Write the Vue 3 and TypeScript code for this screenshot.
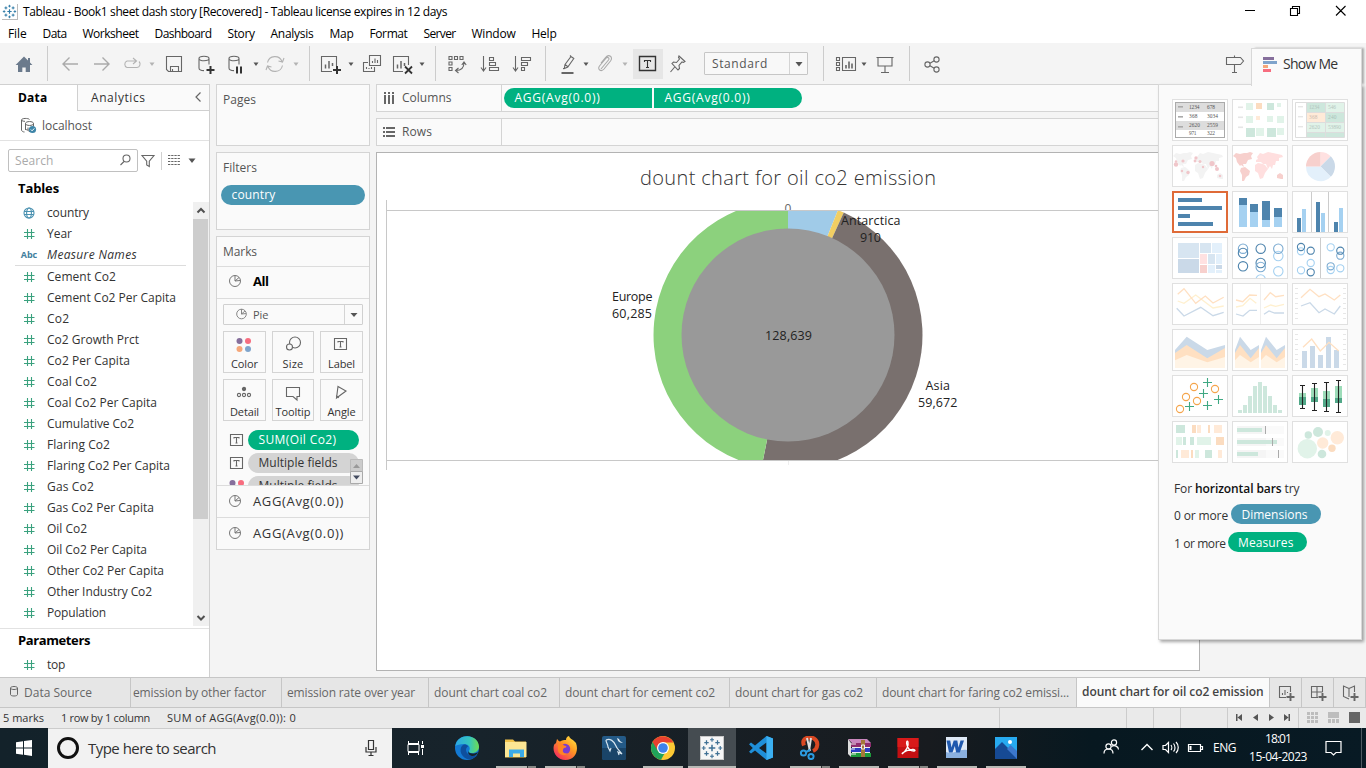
<script setup lang="ts">
type Tool = { k: string; gap: number; off?: boolean }

/* Spreads a label's letters so that it fills the given width in pixels. */
const vFit = {
  mounted(el: HTMLElement, binding: { value: number }) {
    const range = document.createRange()
    range.selectNodeContents(el)
    const natural = range.getBoundingClientRect().width
    const count = (el.textContent || '').trim().length
    if (count > 0 && natural > 0) {
      el.style.letterSpacing = ((binding.value - natural) / count).toFixed(3) + 'px'
    }
  },
}

const menus: [string, number][] = [
  ['File', 18.5], ['Data', 24], ['Worksheet', 56], ['Dashboard', 57], ['Story', 27], ['Analysis', 43],
  ['Map', 24], ['Format', 38], ['Server', 32], ['Window', 44], ['Help', 25],
]

const r = (x: number, y: number, x2: number, y2: number, c: string) =>
  `<rect x="${x}" y="${y}" width="${x2 - x}" height="${y2 - y}" fill="${c}"/>`
const c = (x: number, y: number, rad: number, fill: string) => `<circle cx="${x}" cy="${y}" r="${rad}" fill="${fill}" stroke="none"/>`
const ring = (x: number, y: number, rad: number, s: string) =>
  `<circle cx="${x}" cy="${y}" r="${rad}" fill="none" stroke="${s}" stroke-width="1.1"/>`
const line = (pts: string, s: string, w = 1.3) => `<polyline points="${pts}" fill="none" stroke="${s}" stroke-width="${w}"/>`
const area = (pts: string, f: string) => `<polygon points="${pts}" fill="${f}"/>`
const txt = (x: number, y: number, s: string, f: string, w: number) =>
  `<text x="${x}" y="${y}" font-size="5.4" font-family="Liberation Serif, serif" fill="${f}" textLength="${w}">${s}</text>`

const plus = '<path d="M19 14v8M15 18h8" stroke="#333" stroke-width="2"/>'

const icons: Record<string, string> = {
  home: '<path d="M12 4.500 3.600 13H6v7h4.300v-4.600h3.400V20H18v-7h2.400L18 10.500V6h-2v2.400z" fill="#6b7a8c" stroke="none"/>',
  back: '<path d="M20 12H5M11.500 5.500 5 12l6.500 6.500" stroke="#aaa" stroke-width="1.400"/>',
  fwd: '<path d="M4 12h15M12.500 5.500 19 12l-6.500 6.500" stroke="#aaa" stroke-width="1.400"/>',
  redo: '<path d="M16 9H7a3.500 3.500 0 0 0 0 6.500h10a3.500 3.500 0 0 0 2-6M13 6l3.500 3-3.500 3" stroke="#b3b3b3"/>',
  save: '<path d="M4.500 4.500h15v15h-13l-2-2zM8.500 19v-4.500h8V19M10.500 17v2"/>',
  addds: '<path d="M7 6.500v9.500c0 1.600 2 2.600 5 2.600M17 6.500v6M7 6.500c0-3 10-3 10 0s-10 3-10 0"/><path d="M18.500 14v8M14.500 18h8" stroke="#333" stroke-width="2"/>',
  pause: '<path d="M6 6.500v9.500c0 1.600 2 2.600 5 2.600M16 6.500v6M6 6.500c0-3 10-3 10 0s-10 3-10 0"/><path d="M14 14.500v7M18 14.500v7" stroke="#333" stroke-width="2"/>',
  refresh: '<path d="M4.500 10.500a7.600 7.600 0 0 1 14.500-1M19.500 13.500a7.600 7.600 0 0 1-14.500 1M21 6l-1.500 4-4-1M3 18l1.500-4 4 1" stroke="#b3b3b3"/>',
  newsheet: '<path d="M14 19.500H3.500v-15h15V14"/><path d="M7.500 12.500v4M11 9v7.500M14.500 11v3" stroke-width="1.500"/>' + plus,
  dup: '<path d="M9.500 3.500h11v10h-11zM8 10.500H3.500v9h11V15"/><path d="M12.500 9v2M15 6.500v4.500M17.500 8v3M6.500 15v2M9 16v1M11.500 15v2"/>',
  clear: '<path d="M13 19.500H3.500v-15h15V13"/><path d="M7.500 12.500v4M11 9v7.500M14.500 11v3" stroke-width="1.500"/><path d="m15 14.500 7 7M22 14.500l-7 7" stroke="#333" stroke-width="1.800"/>',
  swap: '<path d="M4 4.500h3v3H4zM9.500 4.500h3v3h-3zM15 4.500h3v3h-3zM4 10h3v3H4zM4 15.500h3v3H4zM19 10.500c0 5-3 8-8 8M16.800 13l2.200-3 2.200 3M13.500 16l-3 2.500 3 2.500"/>',
  asc: '<path d="M5.500 4v14M3 15.500 5.500 19 8 15.500M11.500 5.500h4v3h-4zM11.500 10.500h6v3h-6zM11.500 15.500h9v3h-9z"/>',
  desc: '<path d="M5.500 4v14M3 15.500 5.500 19 8 15.500M11.500 5.500h9v3h-9zM11.500 10.500h6v3h-6zM11.500 15.500h3v3h-3z"/>',
  hl: '<path d="m9 12.500 6-8 2.800 2-6 8.500-3.500 1.500zM9 12.500l3 2.200M15 4.500l-1-1M8.300 16.500H7"/><path d="M5.500 21h12" stroke-width="2"/>',
  clip: '<path d="m8 17 7.500-9c1.500-2-1-3.500-2.500-1.800L6.500 14c-2.500 3.200 1.500 6.500 4.500 3L17.500 9c3-4-1.500-7.500-5-3.500L8 11" stroke="#aaa"/>',
  label: '<path d="M4.500 4.500h16v14h-16z" stroke="#333" stroke-width="1.400"/><path d="M9.500 10V8.500h6V10M12.500 8.500v7M11 15.500h3" stroke="#333"/>',
  pin: '<path d="m14 4 6 5.500-1.500 1-1.500-.5-3 3.500.5 3-1.500 1.500L7 11.500 8.500 10l3 .5 3-3.500-1-1.500zM9.700 15 5.500 20"/>',
  fit: '<path d="M2.500 5.500h3v3h-3zM2.500 10.500h3v3h-3zM2.500 15.500h3v3h-3zM8.500 5.500h13v13h-13z"/><path d="M12 13v3.500M15 9.500v7M18 11.500v5" stroke-width="1.600"/>',
  pres: '<path d="M3.500 5.500h17M5 5.500v8.500h14V5.500M12 14v6M8 20.500h8"/>',
  share: '<circle cx="7.500" cy="12.500" r="2.600"/><circle cx="16.500" cy="7.500" r="2.600"/><circle cx="16.500" cy="17.500" r="2.600"/><path d="m10 11.200 4.200-2.400M10 13.800l4.200 2.400"/>',
  sign: '<path d="M11.500 3.500v2M3.500 5.500h14l3 3.500-3 3.500h-14zM11.500 12.500v8M9 20.500h5"/>',
  globe: '<g stroke="#4a91b0"><circle cx="12" cy="12" r="5"/><ellipse cx="12" cy="12" rx="2.400" ry="5"/><path d="M7 10.500h10M7 13.500h10"/></g>',
  hash: '<path d="M10.500 7v10M14.500 7v10M7 10.500h10.500M7 14.500h10.500" stroke="#3aa17e"/>',
  pie: '<circle cx="12" cy="12" r="5.500"/><path d="M12 12V6.500M12 12l4-3.500M12 12l5-.5"/>',
  tbox: '<path d="M5.500 6.500h12v11h-12z" stroke-width="1.100"/><path d="M9 10.500v-1h5v1M11.500 9.500v5.500M10.500 15h2"/>',
  color: c(7.500, 9, 3, '#866f9c') + c(16, 9, 3, '#f76d7f') + c(7.500, 17, 3, '#f5a77a') + c(16, 17, 3, '#7fa4cc'),
  size: '<circle cx="14" cy="10.500" r="5.500"/><circle cx="8.500" cy="15" r="3" fill="#fafafa"/>',
  detail: '<circle cx="12" cy="9" r="1.600" fill="#666"/><circle cx="7" cy="15" r="1.600"/><circle cx="12" cy="15" r="1.600"/><circle cx="17" cy="15" r="1.600"/>',
  tooltip: '<path d="M5.500 7.500h13v9h-2.500v3.500l-4-3.500H5.500z"/>',
  angle: '<path d="m9 6.500 8 4.500-9.500 7zM7 16c1.500.3 2.300 1 2.700 2"/>',
  filter: '<path d="M6 6.500h12l-4.700 5.700v5.300l-2.600-1.500v-3.800z"/>',
  lens: '<circle cx="13.500" cy="10.500" r="3.500"/><path d="m11 13.500-3.500 3.500"/>',
  addsheet: '<path d="M13 17.500H6.500v-11h11V12"/><path d="M9.500 13v2M12 10v5M14.500 12v1"/><path d="M17.500 13v8M13.500 17h8" stroke-width="1.900"/>',
  adddash: '<path d="M13 17.500H6.500v-11h11V12M6.500 12h11M12 6.500v11"/><path d="M17.500 13v8M13.500 17h8" stroke-width="1.900"/>',
  addstory: '<path d="M12 8.500 6.500 6v10.500L12 19M12 8.500 17.500 6v6M12 8.500V17"/><path d="M17.500 13v8M13.500 17h8" stroke-width="1.900"/>',
}

const tools: Tool[] = [
  { k: 'home', gap: 12 }, { k: '|', gap: 11 }, { k: 'back', gap: 10 }, { k: 'fwd', gap: 8 }, { k: 'redo', gap: 6 },
  { k: 'v', gap: 4, off: true }, { k: 'save', gap: 6 }, { k: 'addds', gap: 6 }, { k: 'pause', gap: 7 }, { k: 'v', gap: 5 },
  { k: 'refresh', gap: 3 }, { k: 'v', gap: 5, off: true }, { k: '|', gap: 9 }, { k: 'newsheet', gap: 8 }, { k: 'v', gap: 5 },
  { k: 'dup', gap: 5 }, { k: 'clear', gap: 6 }, { k: 'v', gap: 4 }, { k: '|', gap: 9 }, { k: 'swap', gap: 9 },
  { k: 'asc', gap: 9 }, { k: 'desc', gap: 8 }, { k: '|', gap: 11 }, { k: 'hl', gap: 10 }, { k: 'v', gap: 2 },
  { k: 'clip', gap: 3 }, { k: 'v', gap: 4, off: true }, { k: 'label', gap: 4 }, { k: 'pin', gap: 2 }, { k: 'combo', gap: 15 },
  { k: '|', gap: 15 }, { k: 'fit', gap: 10 }, { k: 'v', gap: 2 }, { k: 'pres', gap: 5 }, { k: '|', gap: 12 },
  { k: 'share', gap: 10 }, { k: 'sign', gap: 279 },
]

const dims: [string, string, number][] = [['globe', 'country', 42], ['hash', 'Year', 25], ['abc', 'Measure Names', 90]]
const measures: [string, number][] = [
  ['Cement Co2', 69], ['Cement Co2 Per Capita', 129], ['Co2', 22.5], ['Co2 Growth Prct', 92], ['Co2 Per Capita', 83],
  ['Coal Co2', 50], ['Coal Co2 Per Capita', 110], ['Cumulative Co2', 87], ['Flaring Co2', 63], ['Flaring Co2 Per Capita', 123],
  ['Gas Co2', 47], ['Gas Co2 Per Capita', 107], ['Oil Co2', 40], ['Oil Co2 Per Capita', 100], ['Other Co2 Per Capita', 117],
  ['Other Industry Co2', 105], ['Population', 59],
]
const markButtons: [string, string, number][] = [
  ['color', 'Color', 27], ['size', 'Size', 21], ['tbox', 'Label', 27],
  ['detail', 'Detail', 29], ['tooltip', 'Tooltip', 35], ['angle', 'Angle', 28],
]

const tabs: { t: string; w: number; f: number; on?: boolean }[] = [
  { t: 'emission by other factor', w: 151, f: 133 }, { t: 'emission rate over year', w: 147, f: 128 },
  { t: 'dount chart coal co2', w: 131, f: 113 }, { t: 'dount chart for cement co2', w: 170, f: 150 },
  { t: 'dount chart for gas co2', w: 147, f: 128 }, { t: 'dount chart for faring co2 emissi...', w: 200, f: 187 },
  { t: 'dount chart for oil co2 emission', w: 193, f: 181.5, on: true },
]

/* donut */
const CX = 788, CY = 335, R = 134.5
const slices = [
  { from: 0, to: 21.8, fill: '#a0cbe8' },
  { from: 21.8, to: 24.5, fill: '#f1ce63' },
  { from: 24.5, to: 191.3, fill: '#79706e' },
  { from: 191.3, to: 360, fill: '#8cd17d' },
]
const wedge = (cx: number, cy: number, rad: number, a: number, b: number) => {
  const p = (deg: number) => {
    const t = (deg * Math.PI) / 180
    return `${(cx + rad * Math.sin(t)).toFixed(2)} ${(cy - rad * Math.cos(t)).toFixed(2)}`
  }
  return `M${cx} ${cy}L${p(a)}A${rad} ${rad} 0 ${b - a > 180 ? 1 : 0} 1 ${p(b)}Z`
}

/* Show Me thumbnails, each on a 56 x 42 canvas */
const G = '#cde7dc', GL = '#e1f3e9', O = '#fbdcc0', OL = '#ffead8', BL = '#cad9e8', D = '#4e84ad', L = '#a5d1f1', M = '#7dacd2'
const LO = '#ffe0c2', LY = '#fff0cf'
const americas = 'M1 11l3-3 4 1 4-1 3 0 3-1 3 1-2 3 1 3-4 1-2 4-3 0 1 3-3-2-1 1-3-4-1-4zM9 23l4-1 5 4-1 4-3 2-2 4-2 0 0-6-2-4z'
const oldWorld =
  'M23 20l3-2 5 1 2 1 3 4-3 4-2 5-3 1-2-6-3-2zM24 17l0-2 2-1-1-2 3-4 3 1 5-2 5 1 9 2 1 2-4 1 0 3-3 0-1 4-2 0-1 4-2-3-2 3-2-5-3 0-2-2-5 0z'
const oceania = 'M45 30l3-2 3 2 0 4-2 0-4-1z'
const bars = [35, 30, 21, 11, 7, 11, 21, 30, 35]
const scaleTicks = (x: number) => [5, 10, 15, 20, 25, 30, 35].map((y) => r(x, y, x + 3, y + 0.7, '#ddd')).join('')
const cross = (x: number, y: number) => `<path d="M${x} ${y - 4.5}v9M${x - 4.5} ${y}h9" stroke="#3fa883" stroke-width="1.1"/>`
const box = (x: number, w1: number, w2: number, a: number, b: number, e: number) =>
  r(x - 3.5, a, x + 3.5, b, '#9ddcb9') + r(x - 3.5, b, x + 3.5, e, '#51a888') +
  `<path d="M${x} ${w1}V${w2}M${x - 2.5} ${w1}h5M${x - 2.5} ${w2}h5" stroke="#222" stroke-width="1.1"/>`

const thumbs: string[] = [
  r(3.500, 3.500, 52.500, 13, '#ddd') + r(3.500, 22, 52.500, 31, '#ddd') +
    '<rect x="3.500" y="3.500" width="49" height="35" fill="none" stroke="#aaa"/>' +
    [7, 17, 27].map((y) => r(6, y, 11, y + 1.6, '#aaa')).join('') +
    txt(17, 10, '1234', '#555', 10.5) + txt(35, 10, '678', '#555', 8) + txt(17, 19, '368', '#555', 8.5) +
    txt(35, 19, '3034', '#555', 11) + txt(17, 28, '2620', '#555', 11) + txt(35, 28, '2559', '#555', 11) +
    txt(17, 36, '971', '#555', 7.5) + txt(35, 36, '322', '#555', 8),
  [7.500, 17.500, 27.500].map((y) => r(6, y, 11, y + 1.6, '#e6e6e6')).join('') +
    r(14, 4, 21, 11, GL) + r(24, 4, 30, 10, O) + r(35, 4, 42, 11, G) + r(45, 4, 49, 8, GL) + r(14, 17, 21, 24, GL) +
    r(24, 17, 28, 21, OL) + r(35, 17, 41, 23, GL) + r(45, 17, 52, 24, GL) + r(14, 29, 23, 38, G) + r(24, 29, 32, 37, GL) +
    r(35, 29, 44, 38, G) + r(45, 29, 52, 36, GL),
  r(15, 3.500, 33.500, 13, G) + r(34, 3.500, 52, 13, GL) + r(15, 13.500, 33.500, 23, OL) + r(34, 13.500, 52, 23, G) +
    r(15, 23.500, 33.500, 33, GL) + r(34, 23.500, 52, 33, GL) + r(15, 34, 52, 38, G) +
    '<path d="M3.500 3.500h49v35h-49zM14.500 3.500v35M33.500 3.500v35M14.500 13.500h38M14.500 23.500h38M14.500 33.500h38" fill="none" stroke="#ddd"/>' +
    [7, 17, 27].map((y) => r(6, y, 11, y + 1.4, '#e6e6e6')).join('') +
    txt(17, 10, '1234', '#b4c6be', 10.5) + txt(36, 10, '546', '#b4c6be', 8) + txt(17, 20, '368', '#ccbcaf', 8.5) +
    txt(36, 20, '240', '#a9c2b8', 8.5) + txt(17, 30, '2620', '#b4c6be', 11) + txt(36, 30, '53890', '#b4c6be', 13),
  `<path d="${americas}${oldWorld}${oceania}" fill="#f3f3f3"/>` +
    [[4, 19.500, 2.200], [11, 16, 1.600], [24, 13, 1.700], [28, 16.500, 1.500], [40, 18.500, 2.600], [45, 24, 2], [48, 31, 1.300], [10, 26, 1.200], [16, 27.500, 1.700], [31, 22, 1.200], [44, 21, 1.300], [23, 16, 1.400], [4, 16.500, 1.200]]
      .map((p) => c(p[0], p[1], p[2], '#f0c6ca')).join(''),
  `<path d="${oldWorld}" fill="#ffdfdf"/><path d="${americas}${oceania}" fill="#f7d0cd"/>`,
  `<path d="${wedge(28.500, 21.500, 14.500, 0, 45)}" fill="#ffe1e1"/><path d="${wedge(28.500, 21.500, 14.500, 45, 135)}" fill="#cad9e8"/><path d="${wedge(28.500, 21.500, 14.500, 135, 270)}" fill="#e3f0fb"/><path d="${wedge(28.500, 21.500, 14.500, 270, 360)}" fill="#f7d0cd"/>`,
  r(6, 7, 30, 11, D) + r(6, 15, 50, 19, D) + r(6, 23, 18, 27, D) + r(6, 31, 41, 35, D),
  r(7, 7, 15, 14, D) + r(7, 14, 15, 36, L) + r(18, 13, 26, 21, D) + r(18, 21, 26, 36, L) + r(30, 10, 38, 29, D) +
    r(30, 29, 38, 36, L) + r(42, 17, 50, 26, D) + r(42, 26, 50, 36, L),
  r(19, 1, 20, 41, '#ccc') + r(36, 1, 37, 41, '#ccc') + r(5, 27, 9, 41, D) + r(10, 18, 14, 41, L) + r(24, 11, 28, 41, D) +
    r(29, 22, 33, 41, L) + r(42, 31, 46, 41, D) + r(47, 17, 51, 41, L),
  r(6, 6, 27, 21, '#d7e5f1') + r(6, 22, 27, 36, BL) + r(28, 6, 39, 16, '#d7e5f1') + r(40, 6, 50, 16, '#e3f0fb') +
    r(28, 17, 35, 27, '#ffe1e1') + r(36, 17, 43, 27, '#d7e5f1') + r(44, 17, 50, 27, '#e3f0fb') + r(28, 28, 35, 36, '#f7d0cd') +
    r(36, 28, 43, 36, '#e3f0fb') + r(44, 28, 50, 32, BL) + r(44, 33, 50, 36, '#e3f0fb'),
  [[11, 11.700, M], [11, 16, D], [11, 29.300, D], [28.700, 11.700, D], [28.700, 26, D], [28.700, 30, M], [28.700, 42.500, L], [46.300, 19, L], [46.300, 11.700, M], [46.300, 34.300, L]]
    .map((p) => ring(+p[0], +p[1], 4.7, String(p[2]))).join(''),
  r(28, 0, 29, 42, '#ccc') +
    [[9, 14.300, L], [9, 10, D], [18.700, 13.700, D], [18.700, 26, L], [9, 33.300, L], [18.700, 35.300, D], [38.700, 10.300, L], [48.300, 18.700, M], [48.300, 13.700, D], [38.700, 33, L], [38.700, 29.300, M], [48.300, 31.300, L]]
      .map((p) => ring(+p[0], +p[1], 3.6, String(p[2]))).join(''),
  line('5.7,18 12,20.3 23.7,12 41,25 51.7,23', LY) + line('5.7,11.3 12,5.7 23.7,20.3 33.3,13 41,20 51.7,14.3', LO) +
    line('4.7,25.3 12,33 28.7,24.3 41,32.7 51.7,29.3', BL),
  r(28, 1, 29, 41, '#eee') + line('4,17 10.7,18.7 17.7,12 25,12.3', LO) + line('32,17 38.3,9.7 43.7,13.7 52,12.3', LO) +
    line('4,24 10.7,22.7 18,15.3 24.3,20.3', LY) + line('32,25 38.7,22 43.7,23.3 52,21.3', LY) +
    line('4,31 11,33 17.7,27.3 25,27.3', BL) + line('32,31.3 37,28 42.7,30 52,30', BL),
  scaleTicks(3) + scaleTicks(51) + line('9,14.7 18,6.3 27,13.7 33,11 42.3,17 48.3,12', LO) +
    line('9,23 18,19.7 27,29.7 33,26 42.3,31 48.3,23', BL),
  area('3,21 14.7,7.7 35.3,21 53,16 53,39 3,39', BL) + area('3,24 14.7,16 35.3,29.3 53,19 53,39 3,39', LO) +
    area('3,31.3 14.7,26 35.3,33.3 53,28 53,39 3,39', '#fff4e6'),
  [0, 26].map((o) =>
    `<g transform="translate(${o} 0)">` + area('3,21 8,7.7 18.7,21 27,16 27,39 3,39', BL) +
    area('3,24 8,16 18.7,29.3 27,19 27,39 3,39', LO) + area('3,31.3 8,26 18.7,33.3 27,28 27,39 3,39', '#fff4e6') + '</g>').join(''),
  scaleTicks(3) + scaleTicks(51) + r(10, 22, 15, 39, BL) + r(18, 17, 23, 39, BL) + r(26, 26, 31, 39, BL) + r(34, 8, 39, 39, BL) +
    r(42, 21, 47, 39, BL) + line('11,18.3 19.7,10 28.3,22 37,13.3 46.7,22', LO),
  [[22, 12], [43, 14], [14, 22], [25, 26], [8, 34]].map((p) => ring(p[0], p[1], 3.6, '#f5a54b')).join('') +
    [[35.500, 7.500], [31.500, 18.500], [46.500, 24.500], [35.500, 30.500], [17.500, 31.500]].map((p) => cross(p[0], p[1])).join(''),
  bars.map((t, i) => r(6 + i * 5, t, 10 + i * 5, 38, G)).join(''),
  box(10.5, 10.5, 33.5, 18, 22, 30) + box(22.5, 8.5, 35.5, 13, 22, 27) + box(34.5, 7.5, 36.5, 16, 24, 32) + box(46.5, 5.5, 37.5, 11, 23, 28),
  r(4, 4, 13, 12, G) + r(20, 4, 24, 12, O) + r(25, 4, 29, 12, OL) + r(36, 4, 38, 12, O) + r(42, 4, 50, 12, OL) +
    r(4, 16, 10, 24, GL) + r(11, 16, 14, 24, G) + r(18, 16, 22, 24, G) + r(25, 16, 39, 24, GL) + r(44, 16, 52, 24, O) +
    r(4, 29, 6, 37, G) + r(9, 29, 17, 37, OL) + r(19, 29, 21, 37, O) + r(23, 29, 27, 37, GL) + r(33, 29, 40, 37, G) + r(46, 29, 50, 37, OL),
  [[5, 30, 33], [17, 45, 40], [29, 26, 46]].map((p) =>
    r(5, p[0], 34, p[0] + 8, '#f5f5f5') + r(34, p[0], 52, p[0] + 8, '#fafafa') + r(5, p[0] + 2, p[1], p[0] + 6, G) + r(p[2], p[0], p[2] + 1, p[0] + 8, '#aaa')).join(''),
  c(15.3, 27.7, 9.7, GL) + c(16.3, 14, 3.7, G) + c(26, 11, 5, G) + c(35.7, 12, 3, GL) + c(45.3, 16.7, 6.7, OL) +
    c(30.7, 22, 5.7, OL) + c(40, 27.3, 3.7, O) + c(30, 33, 4.3, G),
]

const burst = (s: number, col: string, k = 1) => {
  const pl = (x: number, y: number, a: number, w: number) =>
    `<path d="M${12 + x * s} ${12 + (y - a) * s}v${2 * a * s}M${12 + (x - a) * s} ${12 + y * s}h${2 * a * s}" stroke="${col}" stroke-width="${w * k}"/>`
  return pl(0, 0, 3, 1.2) + [[0, -7.5], [0, 7.5], [-7.5, 0], [7.5, 0]].map((p) => pl(p[0], p[1], 1.8, 0.9)).join('') +
    [[-5, -5], [5, -5], [-5, 5], [5, 5]].map((p) => pl(p[0], p[1], 2, 1)).join('')
}

type App = { name: string; bar: string; svg: string }
const apps: App[] = [
  { name: 'edge', bar: '', svg: '<defs><linearGradient id="eg" x1="0" y1="0" x2="1" y2="0"><stop offset="0" stop-color="#2ba7e6"/><stop offset=".6" stop-color="#36c6bd"/><stop offset="1" stop-color="#6fdb50"/></linearGradient></defs><circle cx="12" cy="12" r="12" fill="#1379d2"/><path d="M.3 10C2-3 23-3 24 10.500c0 4-3 6.500-7 6.500-2 0-3.500-.8-3-2 2-3 0-7-5-7-4 0-7 1-8.700 2z" fill="url(#eg)"/><path d="M9 8.500c-5 2-5 11 3 14.500 4 1 8-1 10.500-4-5 2-11 0-11.500-5 0-2 1-3 2-3.500-.5-1.500-2-2-4-2z" fill="#0e4f9d"/><path d="M14 15.300c-.8 2.500 5 3.200 9 .7-1 3-4 4.700-7 3.700-2.500-.8-3.500-3-2-4.400z" fill="#17232b"/>' },
  { name: 'files', bar: 'split', svg: '<path d="M1 3.500h8l2 2h11v16H1z" fill="#f1c24a"/><path d="M1 6h21.500v15H1z" fill="#fce694"/><path d="M5 13.500h15V21h-4v-3.500H9V21H5z" fill="#3cabe8"/>' },
  { name: 'firefox', bar: 'split', svg: '<defs><linearGradient id="ff" x1="1" y1="0" x2=".2" y2="1"><stop offset="0" stop-color="#fff04a"/><stop offset=".45" stop-color="#ff9a22"/><stop offset="1" stop-color="#f5265f"/></linearGradient></defs><path d="M4 3c1 1 2 2.500 3 2.500 2-1.500 4-1.500 6-1.500 0-2 1-3.500 3-4 1 3 3 3 5 5l2 2c3 8-1 17-10.500 17C3.500 24-1 16 1 9c.5-1 1.500-1.500 2-2z" fill="url(#ff)"/><circle cx="12" cy="13" r="5.200" fill="#7a3bd0"/><path d="M5 8c3-1 5 0 6 1.500 2 0 3 1 2 2-2 0-3 1-3 2.500-1 3 3 4 5 3-3 4-9 2-10-2z" fill="#ff8324"/>' },
  { name: 'workbench', bar: '', svg: '<rect width="24" height="24" rx="2" fill="#245a87"/><path d="M0 12h24v10a2 2 0 0 1-2 2H2a2 2 0 0 1-2-2z" fill="#1a4468"/><path d="M4 4c4-2 8 1 10 6 1 3 3 4 6 8l-4-2 1 3M4 4c0 3 2 4 2 7l2 4 1-3" fill="none" stroke="#d8e6f0" stroke-width="1.200"/><path d="m15 2 2 1 1 2 3 2-3-.5-2-1.500z" fill="#e8f0f6"/>' },
  { name: 'chrome', bar: 'full', svg: '<circle cx="12" cy="12" r="12" fill="#fcc934"/><path d="M12 12 1.600 6A12 12 0 0 0 10 23.800L15 15z" fill="#20a35a"/><path d="M1.600 6A12 12 0 0 1 22.400 6.500H12l-5 3.500 0 5z" fill="#e8402f"/><circle cx="12" cy="12" r="6" fill="#fff"/><circle cx="12" cy="12" r="4.800" fill="#3f82ea"/>' },
  { name: 'tableau', bar: 'active', svg: '<rect x=".5" y=".5" width="23" height="23" fill="#f6f6f6" stroke="#c8c8c8"/>' + burst(1.1, '#3f7094', 1.25) },
  { name: 'code', bar: '', svg: '<path d="M0 8.300 2 6.500l4 3L17.500 0 24 2.500v19L17.500 24 6 14.500l-4 3-2-1.800L3.800 12zM17.500 6.500 10 12l7.500 5.500z" fill="#1f8fd8" fill-rule="evenodd"/><path d="M17.500 0 24 2.500v19L17.500 24z" fill="#3bb0f2"/>' },
  { name: 'snip', bar: 'split', svg: '<path d="M6 9.500C3 2 11 0 16 2.500c5 3 4 10.500-1 12.500" fill="none" stroke="#d94823" stroke-width="4"/><path d="m9 2 3 13M13 2l-2 13" stroke="#ddd" stroke-width="2"/><circle cx="5.500" cy="17" r="2.600" fill="none" stroke="#2c9be0" stroke-width="2"/><circle cx="13" cy="20.500" r="2.600" fill="none" stroke="#2c9be0" stroke-width="2"/><path d="m8 16 4-2" stroke="#2c9be0" stroke-width="2"/>' },
  { name: 'rar', bar: 'full', svg: '<path d="m1 3 19 0 4 4H5z" fill="#c987bd"/><path d="M4 7h20v4H4z" fill="#8f2d6f"/><path d="M3 12h20v4H3z" fill="#2c3fc4"/><path d="M4 17h20v4H4z" fill="#1e9a3c"/><path d="M1 3l3 4v14l-3-3z" fill="#ddd"/><path d="M4 8h5M3 13h5M4 18h5M5 11.500h18M5 16.500h18" stroke="#eee"/><path d="M14 4h4v17h-4z" fill="#a57839"/><path d="M14.500 9h3v4h-3z" fill="none" stroke="#eee"/>' },
  { name: 'pdf', bar: 'split', svg: '<rect x="1.500" y="2" width="21" height="20" fill="#c40f12"/><path d="M1.500 2h21v9h-21z" fill="#d91a1a"/><path d="M6 18c4-3 7-8 6-12-1-2-2 0-1 3 1 4 4 6 7 6 2 0 1-2-2-1.500-4 .3-7 1.500-9.500 3.500z" fill="none" stroke="#fff" stroke-width="1.300"/>' },
  { name: 'word', bar: 'full', svg: '<rect x="1" y="1" width="21" height="21" fill="#dfe9f6"/><path d="M1 16c7 3 14-4 21-2v8H1z" fill="#8bb1e0"/><path d="M1.500 4.500h3.700l1.300 7 2.200-7h3.600l1.200 7 2-7h3.500l-4.200 12h-3.600L9.800 10 7.500 16.500H4z" fill="#2059ae"/>' },
  { name: 'photos', bar: 'full', svg: '<rect x="1" y="1" width="22" height="22" fill="#27aaf0"/><path d="M1 13 8 6l15 15v2H1z" fill="#164a94"/><path d="m13 13 3.500-4L23 15v8z" fill="#3c78cd"/><circle cx="16" cy="6" r="2" fill="#fff"/>' },
]
const logo = burst(1.15, '#2f7aa6', 1.6)
</script>

<template>
  <div class="desktop">
    <header class="titlebar">
      <svg class="logo" viewBox="0 0 24 24" v-html="logo" />
      <span v-fit="424">Tableau - Book1 sheet dash story [Recovered] - Tableau license expires in 12 days</span>
      <svg class="winbtns" viewBox="0 0 110 20"><path d="M5 8.500h10M50.500 6.500h7v7h-7zM52.500 6V4.500h7v7H58M96 4l9.500 9.500M105.500 4 96 13.500" /></svg>
    </header>
    <nav class="menubar">
      <span v-for="m in menus" :key="m[0]" :style="{ width: m[1] + 'px' }"><span v-fit="m[1]">{{ m[0] }}</span></span>
    </nav>

    <div class="toolbar">
      <template v-for="(t, i) in tools" :key="i">
        <i v-if="t.k === '|'" class="sep" :style="{ marginLeft: t.gap + 'px' }" />
        <svg v-else-if="t.k === 'v'" class="caret" :class="{ off: t.off }" viewBox="0 0 8 8" :style="{ marginLeft: t.gap + 'px' }"><path d="M1.500 2.500h5L4 6z" /></svg>
        <div v-else-if="t.k === 'combo'" class="fitbox" :style="{ marginLeft: t.gap + 'px' }">
          <span v-fit="56">Standard</span><i><svg viewBox="0 0 8 8"><path d="M.5 2h7L4 6.500z" /></svg></i>
        </div>
        <div v-else class="tool" :class="t.k" :style="{ marginLeft: t.gap + 'px' }"><svg class="ic" viewBox="0 0 24 24" v-html="icons[t.k]" /></div>
      </template>
    </div>

    <main class="work">
      <aside class="datapane">
        <div class="panetabs">
          <b><span v-fit="29.500">Data</span></b>
          <div class="analytics"><span v-fit="54.500">Analytics</span><svg viewBox="0 0 8 12"><path d="M6.500 1.500 2 6l4.500 4.500" /></svg></div>
        </div>
        <div class="source">
          <svg viewBox="0 0 18 18"><path d="M1.500 3v10c0 1 1.500 2 3 2M1.500 3c0-2 7-2 8-.5M1.500 3c.3 1 2 1.300 3.500 1.300M5.500 6.500V13M5.500 6.500c0-2.600 8-2.600 8 0s-8 2.600-8 0M13.500 6.500v3M5.500 12c1 1 2 1 3 1M8 10.500c0 3 0 4 2 4" /><circle cx="12.500" cy="12.500" r="3.600" class="badge" /><path d="m10.800 12.500 1.300 1.300 2.200-2.400" class="tick" /></svg>
          <span v-fit="50">localhost</span>
        </div>
        <div class="searchrow">
          <div class="search"><span v-fit="38.500">Search</span><svg class="ic" viewBox="0 0 24 24" v-html="icons.lens" /></div>
          <svg class="ic funnel" viewBox="0 0 24 24" v-html="icons.filter" />
          <i class="vsep" />
          <svg class="listic" viewBox="0 0 12 10"><path d="M0 .5h12M0 3.500h12M0 6.500h12M0 9.500h12" /></svg>
          <svg class="dd" viewBox="0 0 8 8"><path d="M.5 1.500h7L4 6z" /></svg>
        </div>
        <h2 class="tables"><span v-fit="41">Tables</span></h2>
        <div class="treewrap">
          <div class="tree">
            <div v-for="d in dims" :key="d[1]" class="field">
              <span v-if="d[0] === 'abc'" class="abc">Abc</span>
              <svg v-else class="ic" viewBox="0 0 24 24" v-html="icons[d[0]]" />
              <span v-fit="d[2]" class="name" :class="{ it: d[0] === 'abc' }">{{ d[1] }}</span>
            </div>
            <hr />
            <div v-for="m in measures" :key="m[0]" class="field">
              <svg class="ic" viewBox="0 0 24 24" v-html="icons.hash" /><span v-fit="m[1]" class="name">{{ m[0] }}</span>
            </div>
          </div>
          <div class="scroll">
            <svg viewBox="0 0 16 16"><path d="m4.500 10 3.500-3.500L11.500 10" /></svg><i />
            <svg viewBox="0 0 16 16"><path d="M4.500 6.500 8 10l3.500-3.500" /></svg>
          </div>
        </div>
        <div class="params">
          <h2><span v-fit="72">Parameters</span></h2>
          <div class="field"><svg class="ic" viewBox="0 0 24 24" v-html="icons.hash" /><span v-fit="18" class="name">top</span></div>
        </div>
      </aside>

      <section class="cards">
        <div class="card pages"><h3><span v-fit="33">Pages</span></h3></div>
        <div class="card filters"><h3><span v-fit="34">Filters</span></h3><div class="pill blue"><span v-fit="44">country</span></div></div>
        <div class="card marks">
          <h3><span v-fit="34">Marks</span></h3>
          <div class="mrow all"><svg class="ic" viewBox="0 0 24 24" v-html="icons.pie" /><b v-fit="15.500">All</b></div>
          <div class="mbody">
            <div class="mcombo"><svg class="ic" viewBox="0 0 24 24" v-html="icons.pie" /><span v-fit="15.500">Pie</span><i><svg viewBox="0 0 8 8"><path d="M.5 2h7L4 6z" /></svg></i></div>
            <div class="mgrid">
              <div v-for="b in markButtons" :key="b[1]" class="mbtn"><svg class="ic" viewBox="0 0 24 24" v-html="icons[b[0]]" /><span v-fit="b[2]">{{ b[1] }}</span></div>
            </div>
            <div class="pills">
              <div class="prow"><svg class="ic" viewBox="0 0 24 24" v-html="icons.tbox" /><div class="pill green"><span v-fit="78">SUM(Oil Co2)</span></div></div>
              <div class="prow"><svg class="ic" viewBox="0 0 24 24" v-html="icons.tbox" /><div class="pill grey"><span v-fit="79">Multiple fields</span></div></div>
              <div class="prow"><svg class="ic" viewBox="0 0 24 24" v-html="icons.color" /><div class="pill grey"><span v-fit="79">Multiple fields</span></div></div>
              <svg class="spin" viewBox="0 0 13 25"><path d="M.5.500h12v12H.5z" fill="#ccc" stroke="#bbb" /><path d="M3 9h7L6.500 5z" fill="#999" /><path d="M.5 12.500h12v12H.5z" fill="#eee" stroke="#aaa" /><path d="M3 16.500h7l-3.500 4z" fill="#444c60" /></svg>
            </div>
          </div>
          <div class="mrow"><svg class="ic" viewBox="0 0 24 24" v-html="icons.pie" /><span v-fit="91">AGG(Avg(0.0))</span></div>
          <div class="mrow"><svg class="ic" viewBox="0 0 24 24" v-html="icons.pie" /><span v-fit="91">AGG(Avg(0.0))</span></div>
        </div>
      </section>

      <section class="sheet">
        <div class="shelf">
          <div class="slabel"><svg viewBox="0 0 12 12"><path d="M2 0v2M6 0v2M10 0v2M2 3v9M6 3v9M10 3v9" /></svg><span v-fit="49.500">Columns</span></div>
          <div class="agg first"><span v-fit="86">AGG(Avg(0.0))</span></div><div class="agg last"><span v-fit="86">AGG(Avg(0.0))</span></div>
        </div>
        <div class="shelf">
          <div class="slabel"><svg viewBox="0 0 12 12"><path d="M0 2h2M0 6h2M0 10h2M3 2h9M3 6h9M3 10h9" /></svg><span v-fit="30">Rows</span></div>
        </div>
        <div class="view">
          <svg class="chart" viewBox="377 153 822 517" width="822" height="517">
            <defs>
              <clipPath id="plot"><rect x="387" y="211" width="812" height="249" /></clipPath>
              <clipPath id="axis"><rect x="700" y="200" width="180" height="10" /></clipPath>
            </defs>
            <text x="640" y="185" class="ttl" textLength="296">dount chart for oil co2 emission</text>
            <g clip-path="url(#plot)">
              <path v-for="s in slices" :key="s.from" :d="wedge(CX, CY, R, s.from, s.to)" :fill="s.fill" />
              <circle :cx="CX" :cy="CY" r="106.500" fill="#999" />
            </g>
            <path d="M386.500 200v270M387 210.500h812M387 460.500h812" stroke="#c8c8c8" fill="none" />
            <path d="M788.500 461v4" stroke="#eee" />
            <text x="784.500" y="213" class="ax" clip-path="url(#axis)">0</text>
            <g class="lbl">
              <text x="841" y="225" textLength="59.500">Antarctica</text><text x="860" y="242" textLength="21">910</text>
              <text x="612" y="301" textLength="40.500">Europe</text><text x="612" y="318" textLength="40">60,285</text>
              <text x="765" y="340" textLength="47">128,639</text>
              <text x="925.500" y="390" textLength="24.500">Asia</text><text x="918" y="407" textLength="39.500">59,672</text>
            </g>
          </svg>
        </div>
      </section>

      <aside class="showme">
        <div class="smtab">
          <svg viewBox="0 0 14 15"><path d="M0 0h11v3H0z" fill="#866f9c" /><path d="M0 4h14v3H0z" fill="#7fa4cc" /><path d="M0 8h5v3H0z" fill="#f5a77a" /><path d="M0 12h8v3H0z" fill="#f76d7f" /></svg>
          <span v-fit="54.500">Show Me</span>
        </div>
        <div class="smgrid">
          <div v-for="(t, i) in thumbs" :key="i" class="thumb" :class="{ on: i === 6 }"><svg viewBox="0 0 56 42" v-html="t" /></div>
        </div>
        <p><span v-fit="125.500">For <b>horizontal bars</b> try</span></p>
        <p class="l2"><span v-fit="54">0 or more</span><em class="pill blue"><span v-fit="66">Dimensions</span></em></p>
        <p class="l3"><span v-fit="51.500">1 or more</span><em class="pill green"><span v-fit="55.500">Measures</span></em></p>
      </aside>
    </main>

    <div class="tabs">
      <div class="tab ds"><svg viewBox="0 0 10 12"><path d="M1.500 3v6.500c0 2 7 2 7 0V3c0-2-7-2-7 0s7 2 7 0" /></svg><span v-fit="68">Data Source</span></div>
      <div v-for="(t, i) in tabs" :key="t.t" class="tab" :class="{ on: t.on, near: i === 0 }" :style="{ width: t.w + 'px' }"><span v-fit="t.f">{{ t.t }}</span></div>
      <div v-for="k in ['addsheet', 'adddash', 'addstory']" :key="k" class="tab add"><svg class="ic" viewBox="0 0 24 24" v-html="icons[k]" /></div>
    </div>
    <div class="status">
      <span v-fit="41">5 marks</span><span v-fit="89">1 row by 1 column</span><span v-fit="129">SUM of AGG(Avg(0.0)): 0</span>
      <svg class="sright" viewBox="0 0 367 20">
        <path d="M.5 0v20M127.500 0v20M154.500 0v20M181.500 0v20M228.500 0v20M299.500 0v20" stroke="#ccc" />
        <path d="M237 6h1.500v7H237zM243 6v7l-4.500-3.500zM259 6v7l-5-3.500zM270 6v7l5-3.500zM285 6v7l4.500-3.500zM289.500 6h1.500v7h-1.500z" fill="#555" />
        <path d="M308 4h3v3h-3zM312 4h3v3h-3zM316 4h3v3h-3zM308 8h3v3h-3zM312 8h3v3h-3zM316 8h3v3h-3zM308 12h3v3h-3zM312 12h3v3h-3zM316 12h3v3h-3zM329 4h11v6h-11zM329 11h3v4h-3zM333 11h3v4h-3zM337 11h3v4h-3z" fill="#bdbdbd" />
        <path d="M350 4h11v11h-11z" fill="#666" />
      </svg>
    </div>

    <footer class="taskbar">
      <div class="start"><svg viewBox="0 0 16 16"><path d="M0 2.300 7 1.300V7.500H0zM8 1.100 16 0v7.500H8zM0 8.500h7v6.200l-7-1zM8 8.500h8V16l-8-1.200z" /></svg></div>
      <div class="tsearch">
        <i class="ringo" /><span v-fit="128">Type here to search</span>
        <svg viewBox="0 0 12 18"><path d="M3.500 1.500h5v9h-5zM1 8v5h10V8M6 13v3.500M3.500 16.500h5" /></svg>
      </div>
      <div class="app taskview"><svg viewBox="0 0 18 16"><path d="M1.500 1v3M11.500 1v3M1 4.500h11v7H1zM1.500 12v3M11.500 12v3M1 3.500h11M1 12.500h11M15.500 1v3M15.500 9v6" /><path d="M14 5h3v3h-3z" fill="#fff" stroke="none" /></svg></div>
      <div v-for="a in apps" :key="a.name" class="app" :class="a.bar"><svg viewBox="0 0 24 24" v-html="a.svg" /></div>
      <svg class="tray" viewBox="0 0 110 20">
        <g fill="none" stroke="#fff" stroke-width="1.200">
          <circle cx="5.500" cy="9.500" r="2.600" /><path d="M1 16.500c0-6 9-6 9 0" /><circle cx="11" cy="5.500" r="2.600" /><path d="M8.500 9.500c3-2 7 0 7 3" />
          <path d="m38.500 13 5.500-5.500 5.500 5.500" stroke-width="1.400" />
          <path d="M60 8.500h2.500l3-3v10l-3-3H60zM68 8c1 1.500 1 4 0 5M70.500 6.500c2 2.500 2 6 0 8M73 5c3 3 3 8 0 11" />
          <path d="M85.500 7.500h12v7h-12zM97.500 9.500h2v3h-2" /><path d="M87.500 9v4" stroke-width="2" />
        </g>
      </svg>
      <span class="lang" v-fit="23">ENG</span>
      <div class="clock"><span v-fit="26">18:01</span><span v-fit="58">15-04-2023</span></div>
      <svg class="note" viewBox="0 0 17 17"><path d="M1 1.500h15v11h-5L8.500 15 6 12.500H1z" /></svg>
      <i class="peek" />
    </footer>
  </div>
</template>

<style>
body { margin: 0; overflow: hidden; background: #f4f4f4; }
</style>

<style scoped>
* { box-sizing: border-box; }
.desktop { width: 1366px; height: 768px; overflow: hidden; display: flex; flex-direction: column; background: #f4f4f4; color: #333; font: 12px/20px "Open Sans", "Noto Sans", sans-serif; white-space: nowrap; }
h2, h3, p { margin: 0; font-size: 12px; font-weight: 400; }
b { font-weight: 600; color: #111; }
i, em { font-style: normal; }
svg { flex: none; display: block; }
.ic { width: 24px; height: 24px; fill: none; stroke: #666; stroke-width: 1.1; }

.titlebar { height: 24px; flex: none; display: flex; align-items: center; background: #fff; color: #000; padding-left: 2px; }
.titlebar .logo { width: 16px; height: 16px; margin-right: 5px; border-right: 1px solid #bbb; border-bottom: 1px solid #bbb; }
.titlebar span { width: 424px; }
.winbtns { width: 110px; height: 20px; margin-left: 793px; fill: none; stroke: #000; stroke-width: 1.1; }
.menubar { height: 19px; flex: none; display: flex; gap: 16px; padding-left: 8px; background: #fff; color: #000; }

.toolbar { height: 41px; flex: none; display: flex; align-items: center; background: #f4f4f4; }
.sep { width: 1px; height: 35px; background: #ccc; flex: none; }
.caret { width: 8px; height: 8px; fill: #555; }
.caret.off { fill: #b3b3b3; }
.tool { width: 24px; flex: none; }
.tool.label { width: 30px; height: 30px; padding: 3px 2px; background: #e6e6e6; }
.fitbox { width: 104px; height: 23px; flex: none; display: flex; justify-content: space-between; border: 1px solid #c6c6c6; border-radius: 1px; background: #f8f8f8; padding-left: 7px; line-height: 21px; color: #555; }
.fitbox i, .mcombo i { width: 18px; border-left: 1px solid #d4d4d4; display: flex; align-items: center; justify-content: center; }
.fitbox svg, .mcombo i svg { width: 8px; height: 8px; fill: #555; }

.work { height: 593px; flex: none; display: flex; position: relative; }
.datapane { width: 210px; flex: none; background: #fff; border-right: 1px solid #d0d0d0; border-top: 1px solid #d0d0d0; display: flex; flex-direction: column; }
.panetabs { height: 26px; flex: none; display: flex; line-height: 25px; }
.panetabs b { width: 77px; padding-left: 18px; color: #000; font-weight: 700; }
.analytics { flex: 1; display: flex; justify-content: space-between; align-items: center; padding: 0 7px 0 13px; background: #fafafa; border-left: 1px solid #d0d0d0; border-bottom: 1px solid #d0d0d0; }
.analytics svg { width: 8px; height: 12px; margin-top: -1px; fill: none; stroke: #666; stroke-width: 1.2; }
.source { height: 30px; flex: none; display: flex; align-items: center; gap: 4px; padding-left: 20px; border-bottom: 1px solid #e2e2e2; color: #555; line-height: 28px; }
.source svg { width: 18px; height: 18px; fill: none; stroke: #666; }
.source .badge { fill: #3d85a8; stroke: none; }
.source .tick { stroke: #fff; }
.searchrow { height: 39px; flex: none; display: flex; align-items: center; padding-left: 8px; }
.search { width: 130px; height: 23px; display: flex; justify-content: space-between; align-items: center; border: 1px solid #c0c0c0; border-radius: 2px; padding-left: 6px; color: #aaa; }
.search .ic { margin-bottom: 1px; }
.funnel { margin-left: -2px; }
.vsep { width: 1px; height: 18px; background: #d0d0d0; margin-left: 1px; }
.listic { width: 12px; height: 10px; margin: 0 0 2px 6px; stroke: #666; stroke-dasharray: 2.3 .9; }
.dd { width: 8px; height: 8px; margin-left: 8px; fill: #555; }
.tables, .params h2 { height: 22px; flex: none; font-weight: 700; color: #000; font-size: 13px; line-height: 16px; padding-left: 18px; }
.treewrap { height: 427px; flex: none; display: flex; border-bottom: 1px solid #e2e2e2; overflow: hidden; }
.tree { width: 193px; height: 426px; }
.field { height: 21px; display: flex; align-items: center; padding-left: 17px; }
.name { margin-left: 6px; width: 135px; line-height: 20px; }
.name.it { font-style: italic; }
.abc { width: 24px; text-align: center; color: #43809e; font-size: 9px; font-weight: 700; }
.tree hr { width: 171px; height: 1px; margin: 0 0 0 15px; border: 0; background: #dcdcdc; }
.scroll { width: 16px; height: 424px; display: flex; flex-direction: column; background: #f0f0f0; }
.scroll svg { width: 16px; height: 17px; fill: none; stroke: #505050; stroke-width: 2; }
.scroll i { width: 15px; height: 300px; background: #cdcdcd; margin-bottom: auto; }
.params { padding-top: 3px; }
.params h2 { height: 22px; }

.cards { width: 154px; flex: none; margin-left: 6px; display: flex; flex-direction: column; gap: 6px; }
.card { background: #fafafa; border: 1px solid #d4d4d4; }
.card h3 { height: 29px; line-height: 30px; padding-left: 6px; color: #555; }
.pages { height: 62px; }
.filters { height: 78px; }
.marks { height: 314px; }
.pill { display: flex; align-items: center; height: 20px; border-radius: 10px; color: #fff; padding-left: 10.5px; }
.pill span { font-weight: 500; }
.blue { background: #4996b2; }
.green { background: #00b180; }
.grey { background: #d4d4d4; color: #333; }
.filters .pill { width: 144px; margin: 3px 0 0 4px; }
.mrow { height: 32px; display: flex; align-items: center; gap: 6px; padding: 0 0 2px 6px; border-top: 1px solid #dcdcdc; font-size: 13px; }
.mrow.all { padding-bottom: 3px; }
.mrow b { color: #000; font-weight: 700; }
.mrow .ic, .mcombo .ic { stroke: #777; stroke-width: 1; }
.mbody { height: 187px; border-top: 1px solid #dcdcdc; padding: 5px 6px 0; }
.mcombo { height: 21px; display: flex; align-items: center; border: 1px solid #d0d0d0; border-radius: 1px; color: #555; padding-left: 7px; line-height: 19px; font-size: 11px; }
.mcombo .ic { width: 21px; margin: -1px 1px 0 0; }
.mcombo i { margin-left: auto; height: 19px; }
.mgrid { margin-top: 6px; display: grid; grid-template-columns: 43px 42px 43px; column-gap: 6px; row-gap: 6px; }
.mbtn { height: 42px; display: flex; flex-direction: column; align-items: center; border: 1px solid #d4d4d4; font-size: 11px; line-height: 15px; }
.mbtn .ic { margin-right: 1px; }
.pills { height: 55px; margin-top: 9px; overflow: hidden; position: relative; }
.prow { height: 23px; display: flex; align-items: flex-start; }
.prow .ic { margin: -2px -1px 0 2px; }
.prow .pill { width: 111px; flex: none; }
.spin { position: absolute; right: 0; top: 29px; width: 13px; height: 25px; }

.sheet { width: 824px; flex: none; margin-left: 6px; display: flex; flex-direction: column; gap: 6px; }
.shelf { height: 28px; width: 824px; flex: none; display: flex; align-items: center; background: #fafafa; border: 1px solid #d4d4d4; }
.slabel { width: 125px; height: 26px; flex: none; display: flex; align-items: center; gap: 7px; padding-left: 6px; border-right: 1px solid #d4d4d4; color: #555; }
.slabel svg { width: 12px; height: 12px; fill: none; stroke: #666; stroke-width: 2; }
.agg { width: 148px; height: 20px; display: flex; align-items: center; padding-left: 10.5px; background: #00b180; color: #fff; font-weight: 500; }
.agg.first { margin: 0 2px; border-radius: 10px 0 0 10px; }
.agg.last { border-radius: 0 10px 10px 0; }
.view { height: 519px; flex: none; background: #fff; border: 1px solid #b3b3b3; }
.ttl { font: 300 20px "Open Sans", sans-serif; fill: #333; }
.ax { font: 12px "Open Sans", sans-serif; fill: #666; }
.lbl text { font: 12.5px "Open Sans", sans-serif; fill: #222; }

.showme { position: absolute; left: 1158px; top: 0; width: 204px; height: 556px; background: #fafafa; border: 1px solid #d8d8d8; box-shadow: 2px 2px 3px rgba(0, 0, 0, .35); padding: 14px 0 0 13px; }
.smtab { position: absolute; right: -1px; top: -37px; width: 111px; height: 38px; display: flex; align-items: center; gap: 6px; padding: 0 0 8px 11px; font-size: 14px; background: #fafafa; border: 1px solid #d8d8d8; border-bottom: 0; box-shadow: 3px -1px 2px -1px rgba(0, 0, 0, .3); }
.smtab svg { width: 14px; height: 15px; margin-top: 1px; }
.smgrid { display: grid; grid-template-columns: repeat(3, 56px); gap: 4px; }
.thumb { height: 42px; background: #fff; outline: 1px solid #e0e0e0; outline-offset: -1px; overflow: hidden; }
.thumb svg { width: 56px; height: 42px; }
.thumb.on { outline: 2px solid #df6a37; outline-offset: -2px; }
.showme p { display: flex; align-items: flex-end; height: 20px; padding-left: 2px; margin-top: 16px; }
.showme .l2, .showme .l3 { margin-top: 5px; gap: 3px; line-height: 17px; }
.showme .l3 { margin-top: 8px; gap: 2px; }
.showme em.blue { width: 90px; }
.showme em.green { width: 79px; }

.tabs { height: 31px; flex: none; display: flex; border-top: 1px solid #c6c6c6; border-bottom: 1px solid #c6c6c6; background: #e6e6e6; }
.tab { flex: none; border-right: 1px solid #c6c6c6; padding-left: 5px; line-height: 30px; color: #666; overflow: hidden; }
.tab.near { padding-left: 2px; }
.tab.ds { width: 131px; display: flex; gap: 5px; padding-left: 9px; }
.ds svg { width: 10px; height: 12px; margin-top: 7px; fill: none; stroke: #666; }
.tab.on { background: #fafafa; color: #444; font-weight: 600; line-height: 27px; }
.tab.add { width: 32px; padding: 2px 0 0 3px; }
.status { height: 20px; flex: none; display: flex; gap: 17px; padding-left: 3px; background: #eaeaea; font-size: 11px; line-height: 20px; }
.sright { width: 367px; height: 20px; margin-left: auto; }

.taskbar { height: 40px; flex: none; display: flex; background: linear-gradient(90deg, #13222a 0%, #17232b 35%, #181b1f 68%, #071820 80%, #081a24 100%); color: #fff; }
.start { width: 48px; display: flex; align-items: center; justify-content: center; }
.start svg { width: 16px; height: 16px; fill: #fff; }
.tsearch { width: 344px; background: #f2f2f2; display: flex; align-items: center; color: #333; font-size: 15px; padding: 0 15px 1px 9px; border-top: 1px solid #ccc; }
.ringo { width: 22px; height: 22px; border: 3px solid #111; border-radius: 50%; margin-right: 9px; }
.tsearch svg { width: 12px; height: 18px; margin-left: auto; fill: none; stroke: #333; stroke-width: 1.2; }
.app { width: 48px; flex: none; margin-right: 1px; display: flex; align-items: center; justify-content: center; position: relative; }
.app svg { width: 24px; height: 24px; }
.app.taskview { margin-right: 3px; }
.taskview svg { width: 18px; height: 16px; fill: none; stroke: #fff; }
.app.active { background: #454c51; }
.app.full::after, .app.split::after, .app.active::after { content: ""; position: absolute; left: 4px; right: 4px; bottom: 0; height: 2px; background: #b8bab6; }
.app.active::after { left: 0; right: 0; }
.app.split::after { background: linear-gradient(90deg, #b8bab6 31px, #333 31px, #333 32px, #858784 32px); }
.tray { width: 110px; height: 20px; margin: 9px 0 0 72px; }
.lang { width: 24px; line-height: 40px; }
.clock { width: 58px; margin-left: 12px; display: flex; flex-direction: column; align-items: center; line-height: 18px; padding-top: 2px; }
.note { width: 17px; height: 17px; margin: 12px 0 0 18px; fill: none; stroke: #fff; stroke-width: 1.2; }
.peek { width: 1px; margin-left: 19px; background: #4d5a62; }
</style>
